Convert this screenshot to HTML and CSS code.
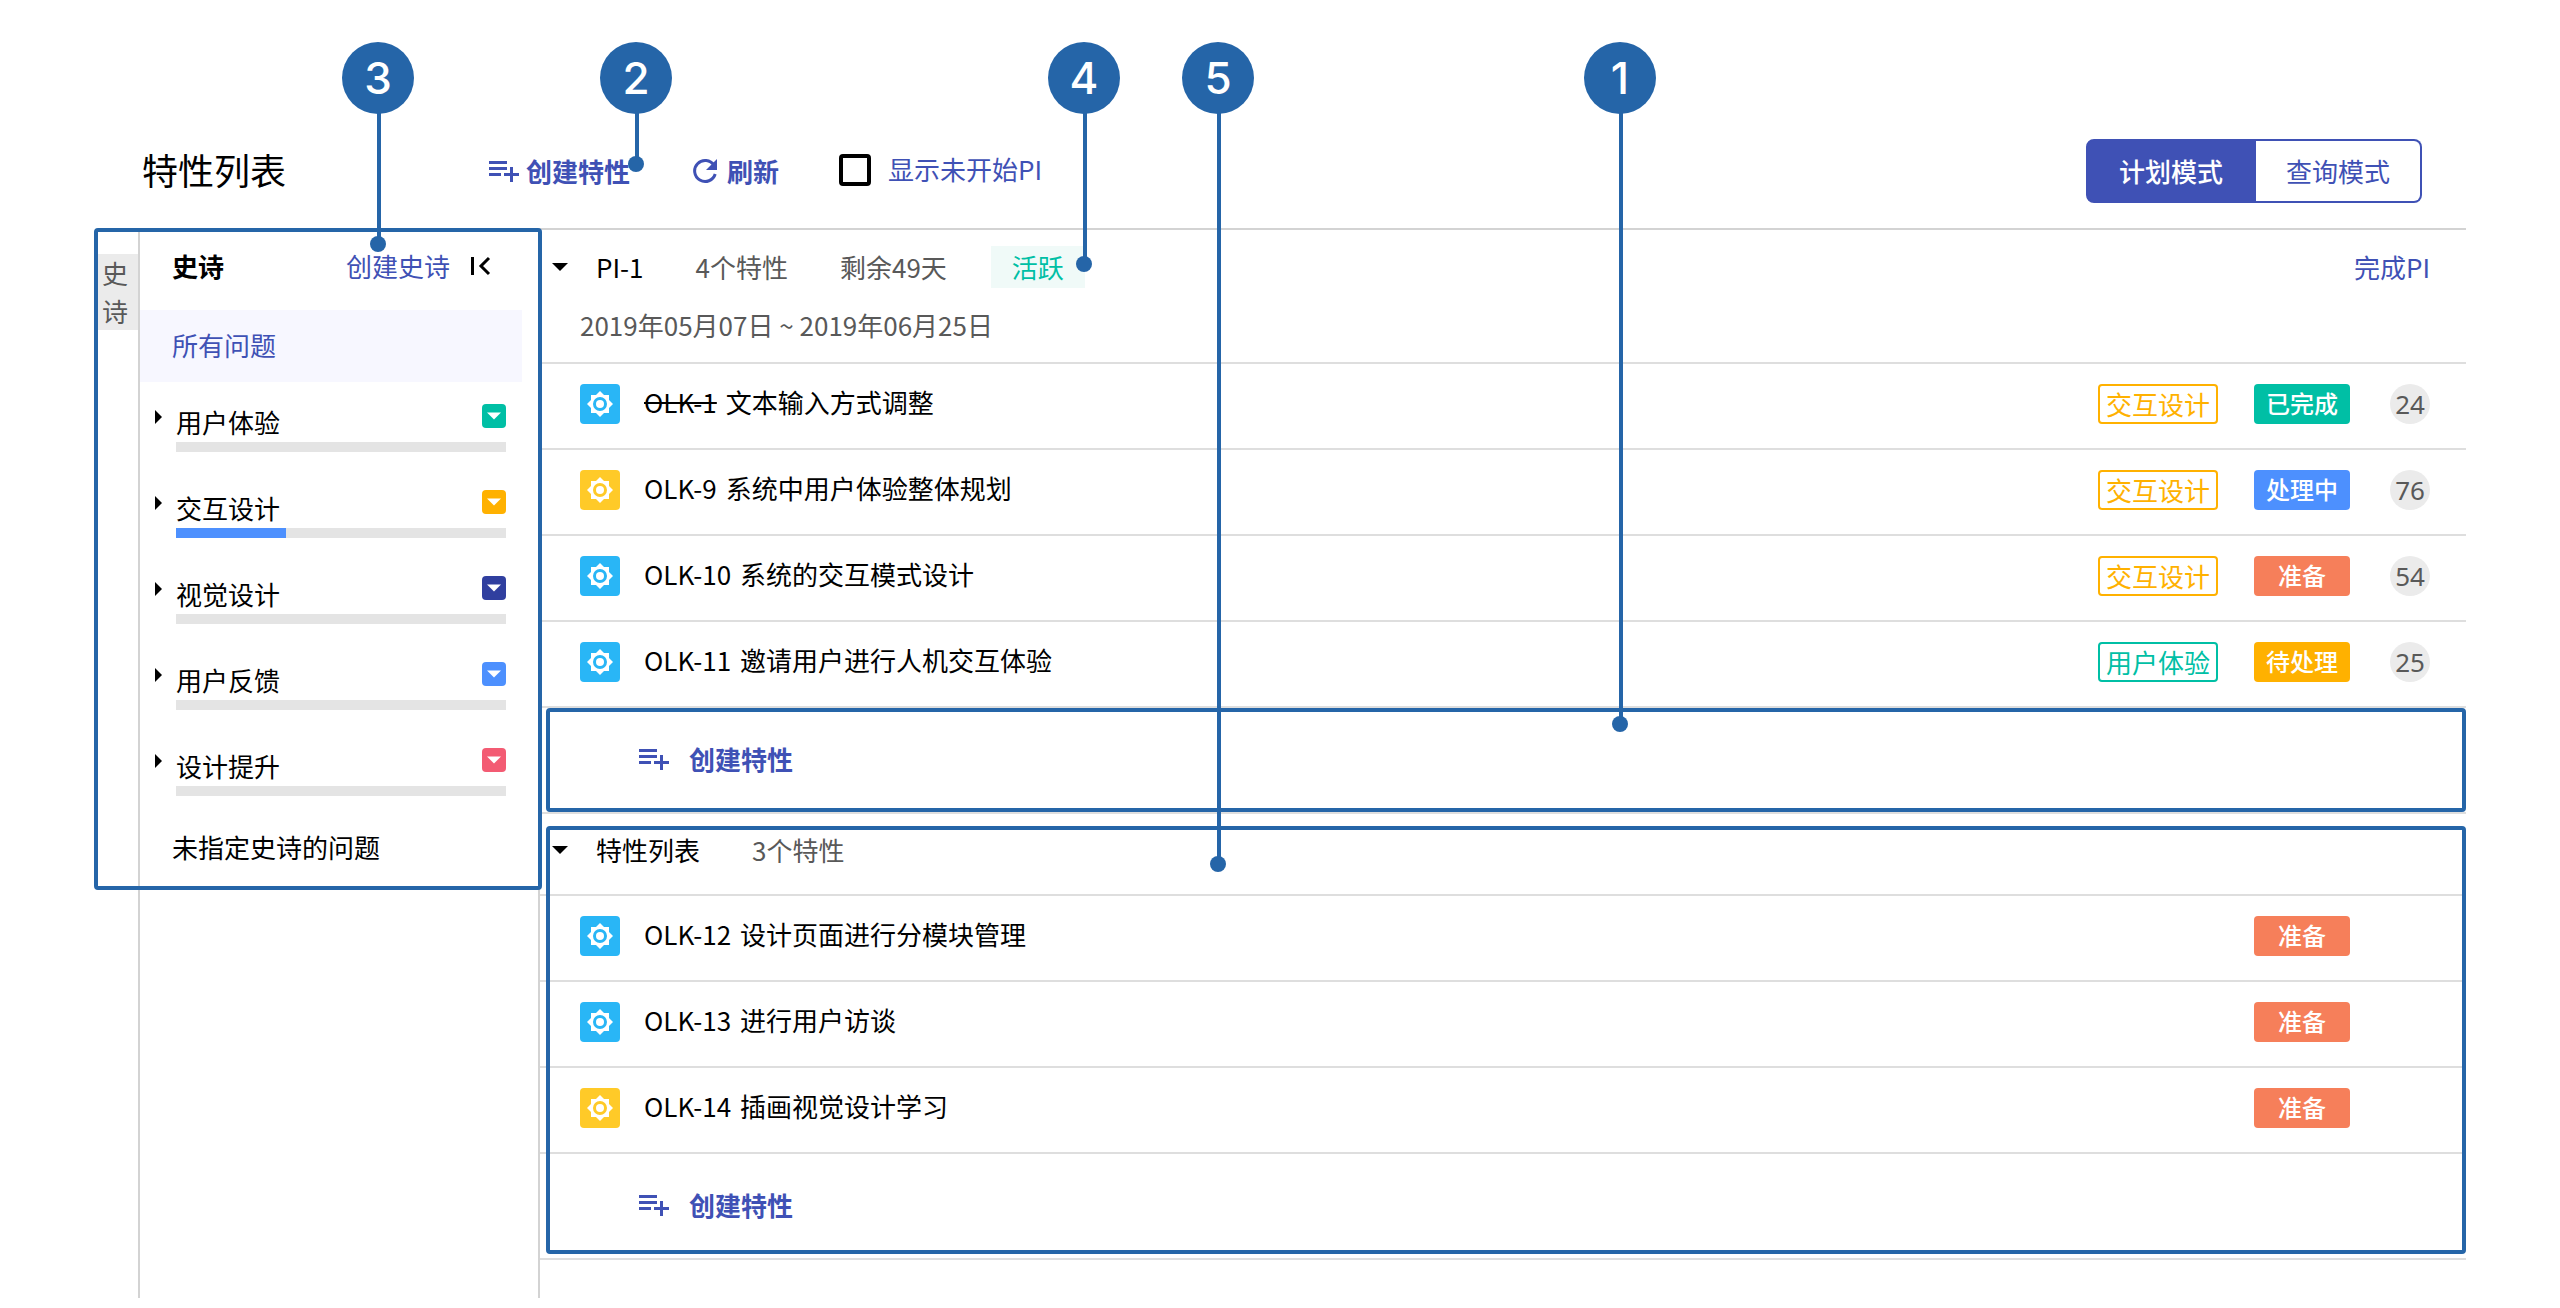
FILE: index.html
```html
<!DOCTYPE html>
<html lang="zh-CN">
<head>
<meta charset="utf-8">
<title>特性列表</title>
<link rel="stylesheet" href="styles.css">
</head>
<body>
<svg class="defs" aria-hidden="true">
  <symbol id="add" viewBox="0 0 30 24"><path d="M0 2h18v3H0zM0 8h18v3H0zM0 14h12v3H0zM21 8h3v6h6v3h-6v6h-3v-6h-6v-3h6z" fill="currentColor"/></symbol>
  <symbol id="gear" viewBox="0 0 40 40"><path fill="#fff" fill-rule="evenodd" d="M20 7l4 4h5v5l4 4-4 4v5h-5l-4 4-4-4h-5v-5l-4-4 4-4v-5h5zM20 13a7 7 0 1 0 0 14 7 7 0 0 0 0-14z"/><circle cx="20" cy="20" r="4" fill="#fff"/></symbol>
  <symbol id="down" viewBox="0 0 16 8"><path d="M0 0h16L8 8z" fill="currentColor"/></symbol>
  <symbol id="right" viewBox="0 0 8 14"><path d="M0 0l7 7-7 7z" fill="currentColor"/></symbol>
</svg>
<div class="page">
  <header class="toolbar">
    <h1 class="title">特性列表</h1>
    <button class="tool"><svg class="add"><use href="#add"/></svg>创建特性</button>
    <button class="tool tool-refresh"><svg class="refresh" viewBox="0 0 26 26"><path d="M22 7.300A10.500 10.500 0 1 0 23.200 16" fill="none" stroke="currentColor" stroke-width="3"/><path d="M25 1v11H14z" fill="currentColor"/></svg>刷新</button>
    <label class="check"><input type="checkbox"><span class="check-text">显示未开始PI</span></label>
    <div class="modes"><button class="mode mode-on">计划模式</button><button class="mode">查询模式</button></div>
  </header>
  <div class="body">
    <nav class="tabs"><button class="tab">史诗</button></nav>
    <aside class="epics">
      <div class="epics-head"><h2 class="epics-title">史诗</h2><a class="link" href="#">创建史诗</a>
        <button class="collapse" aria-label="收起"><svg viewBox="0 0 20 20"><path d="M0 1h3v18H0z"/><path d="M18 2l-8 8 8 8" fill="none" stroke="#000" stroke-width="3"/></svg></button></div>
      <a class="all" href="#">所有问题</a>
      <ul class="epic-list">
        <li class="epic"><svg class="right"><use href="#right"/></svg><span class="epic-name">用户体验</span><button class="swatch green" aria-label="菜单"><svg><use href="#down"/></svg></button><div class="bar"></div></li>
        <li class="epic"><svg class="right"><use href="#right"/></svg><span class="epic-name">交互设计</span><button class="swatch amber" aria-label="菜单"><svg><use href="#down"/></svg></button><div class="bar"><div class="fill" style="width:33.3%"></div></div></li>
        <li class="epic"><svg class="right"><use href="#right"/></svg><span class="epic-name">视觉设计</span><button class="swatch navy" aria-label="菜单"><svg><use href="#down"/></svg></button><div class="bar"></div></li>
        <li class="epic"><svg class="right"><use href="#right"/></svg><span class="epic-name">用户反馈</span><button class="swatch blue" aria-label="菜单"><svg><use href="#down"/></svg></button><div class="bar"></div></li>
        <li class="epic"><svg class="right"><use href="#right"/></svg><span class="epic-name">设计提升</span><button class="swatch pink" aria-label="菜单"><svg><use href="#down"/></svg></button><div class="bar"></div></li>
      </ul>
      <a class="none" href="#">未指定史诗的问题</a>
    </aside>
    <main class="main">
      <section>
        <div class="pi-head">
          <div class="pi-line"><svg class="down"><use href="#down"/></svg><span class="name">PI-1</span><span class="meta">4个特性</span><span class="meta">剩余49天</span><span class="state">活跃</span><a class="link finish" href="#">完成PI</a></div>
          <div class="dates">2019年05月07日 ~ 2019年06月25日</div>
        </div>
        <ul class="rows">
          <li class="row"><svg class="type sky"><use href="#gear"/></svg><span class="text"><s class="key">OLK-1</s> 文本输入方式调整</span><span class="tag tag-amber">交互设计</span><span class="status green">已完成</span><span class="count">24</span></li>
          <li class="row"><svg class="type gold"><use href="#gear"/></svg><span class="text"><span class="key">OLK-9</span> 系统中用户体验整体规划</span><span class="tag tag-amber">交互设计</span><span class="status blue">处理中</span><span class="count">76</span></li>
          <li class="row"><svg class="type sky"><use href="#gear"/></svg><span class="text"><span class="key">OLK-10</span> 系统的交互模式设计</span><span class="tag tag-amber">交互设计</span><span class="status coral">准备</span><span class="count">54</span></li>
          <li class="row"><svg class="type sky"><use href="#gear"/></svg><span class="text"><span class="key">OLK-11</span> 邀请用户进行人机交互体验</span><span class="tag tag-green">用户体验</span><span class="status amber">待处理</span><span class="count">25</span></li>
        </ul>
        <div class="create create-framed"><button class="tool"><svg class="add"><use href="#add"/></svg>创建特性</button></div>
      </section>
      <section class="backlog">
        <div class="backlog-head"><svg class="down"><use href="#down"/></svg><h2 class="name">特性列表</h2><span class="meta">3个特性</span></div>
        <ul class="rows">
          <li class="row"><svg class="type sky"><use href="#gear"/></svg><span class="text"><span class="key">OLK-12</span> 设计页面进行分模块管理</span><span class="status coral">准备</span><span class="count-gap"></span></li>
          <li class="row"><svg class="type sky"><use href="#gear"/></svg><span class="text"><span class="key">OLK-13</span> 进行用户访谈</span><span class="status coral">准备</span><span class="count-gap"></span></li>
          <li class="row"><svg class="type gold"><use href="#gear"/></svg><span class="text"><span class="key">OLK-14</span> 插画视觉设计学习</span><span class="status coral">准备</span><span class="count-gap"></span></li>
        </ul>
        <div class="create"><button class="tool"><svg class="add"><use href="#add"/></svg>创建特性</button></div>
      </section>
    </main>
    <div class="frame-epics"></div>
  </div>
  <div class="pin pin-3">3</div>
  <div class="pin pin-2">2</div>
  <div class="pin pin-4">4</div>
  <div class="pin pin-5">5</div>
  <div class="pin pin-1">1</div>
</div>
</body>
</html>
```

FILE: styles.css
```css
* { box-sizing: border-box; }
body { margin: 0; background: #fff; color: #000; font: 26px/38px "Noto Sans CJK SC", sans-serif; }
h1, h2, ul { margin: 0; padding: 0; font: inherit; list-style: none; }
button { margin: 0; padding: 0; border: 0; background: none; font: inherit; color: inherit; cursor: pointer; }
a { color: inherit; text-decoration: none; }
svg { display: block; flex: none; }
.defs { position: absolute; width: 0; height: 0; }

.page { position: relative; min-height: 100vh; display: flex; flex-direction: column; padding: 114px 94px 10px 98px; }

/* Toolbar */
.toolbar { display: flex; align-items: center; height: 116px; padding: 0 44px; border-bottom: 2px solid #d3d3d3; }
.title { width: 347px; padding-bottom: 4px; font-size: 36px; line-height: 54px; }
.tool { display: flex; align-items: center; gap: 7px; color: #3f51b5; font-weight: 700; }
.add { width: 30px; height: 24px; }
.tool-refresh { margin-left: 62px; gap: 9px; }
.refresh { width: 26px; height: 26px; }
.check { display: flex; align-items: center; gap: 17px; margin-left: 60px; padding-bottom: 2px; color: #3f51b5; }
.check-text { padding-bottom: 2px; }
.check input { appearance: none; width: 32px; height: 32px; margin: 0; border: 4px solid #000; border-radius: 4px; }
.modes { display: flex; margin-left: auto; }
.mode { width: 166px; height: 64px; border: 2px solid #3f51b5; border-left: 0; border-radius: 0 8px 8px 0; color: #3f51b5; }
.mode-on { width: 170px; border-left: 2px solid #3f51b5; border-radius: 8px 0 0 8px; background: #3f51b5; color: #fff; font-weight: 500; }

/* Epic side panel */
.body { position: relative; flex: 1; display: flex; }
.tabs { width: 42px; padding-top: 24px; border-right: 2px solid #d3d3d3; }
.tab { width: 40px; padding: 0 8px 0 4px; background: #ebebeb; color: #595959; text-align: left; }
.epics { width: 400px; border-right: 2px solid #d3d3d3; }
.epics-head { display: flex; align-items: center; height: 80px; padding: 0 47px 8px 32px; }
.epics-title { font-weight: 700; margin-right: auto; }
.link { color: #3f51b5; }
.collapse { margin-left: 21px; }
.collapse svg { width: 20px; height: 20px; }
.all { display: block; margin-right: 16px; padding: 16px 32px 18px; background: #f7f7ff; color: #3f51b5; }
.epic { display: grid; grid-template-columns: 21px 1fr 24px; grid-template-rows: 38px 10px; align-items: start; align-content: start; height: 86px; padding: 22px 32px 0 15px; }
.right { width: 8px; height: 14px; margin-top: 6px; }
.epic-name { line-height: 36px; }
.swatch { display: grid; place-items: center; width: 24px; height: 24px; border-radius: 4px; color: #fff; }
.swatch svg { width: 14px; height: 8px; }
.bar { grid-column: 2 / 4; height: 10px; background: #e4e4e4; }
.fill { height: 10px; background: #4d90fe; }
.none { display: block; padding: 16px 32px; }

/* Feature lists */
.main { flex: 1; min-width: 0; }
.pi-head { height: 134px; padding-top: 16px; border-bottom: 2px solid #dedede; }
.pi-line { display: flex; align-items: center; height: 42px; padding: 0 36px 0 12px; }
.down { width: 16px; height: 8px; }
.name { margin-left: 28px; }
.meta { margin-left: 52px; color: #595959; }
.state { margin-left: 44px; padding: 2px 21px; background: #f0faf8; color: #00bfa5; }
.finish { margin-left: auto; }
.dates { padding: 18px 40px 0; color: #595959; }
.row { display: flex; align-items: center; height: 86px; padding: 0 36px 4px 40px; border-bottom: 2px solid #dedede; }
.type { width: 40px; height: 40px; border-radius: 4px; }
.text { flex: 1; margin-left: 24px; padding-bottom: 4px; }
.key { margin-right: 3px; }
.tag { width: 120px; height: 40px; border: 2px solid; border-radius: 4px; line-height: 36px; text-align: center; }
.status { width: 96px; height: 40px; margin-left: 36px; border-radius: 4px; color: #fff; font-size: 24px; font-weight: 500; line-height: 38px; text-align: center; }
.count { width: 40px; height: 40px; margin-left: 40px; border-radius: 50%; background: #ebebeb; color: #595959; font-family: "Noto Sans", sans-serif; line-height: 40px; text-align: center; }
.count-gap { width: 80px; }
.create { position: relative; display: flex; align-items: center; height: 106px; padding: 0 99px 2px; border-bottom: 2px solid #dedede; }
.create .tool { gap: 20px; }
.backlog { position: relative; }
.backlog-head { display: flex; align-items: center; height: 82px; padding: 0 12px 8px; border-bottom: 2px solid #dedede; }

.sky { background: #29b6f6; }
.gold { background: #ffca28; }
.green { background: #00bfa5; }
.amber { background: #ffb100; }
.navy { background: #303f9f; }
.blue { background: #4d90fe; }
.pink { background: #f35b73; }
.coral { background: #f67f5a; }
.tag-amber { color: #ffb100; }
.tag-green { color: #00bfa5; }

/* Guide frames and numbered pins laid over the page */
.frame-epics, .create-framed::after, .backlog::after { content: ""; position: absolute; border: 4px solid #2565a8; border-radius: 4px; pointer-events: none; }
.frame-epics { top: -2px; left: -4px; width: 448px; height: 662px; }
.create-framed::after { inset: 0 0 0 6px; }
.backlog::after { inset: 12px 0 6px 6px; }
.pin { position: absolute; top: 42px; width: 72px; height: 72px; border-radius: 50%; background: #2565a8; color: #fff; font: 500 44px/72px Inter, sans-serif; text-align: center; }
.pin::before { content: ""; position: absolute; top: 70px; left: 35px; width: 4px; height: var(--stem); background: #2565a8; }
.pin::after { content: ""; position: absolute; top: calc(66px + var(--stem)); left: 28px; width: 16px; height: 16px; border-radius: 50%; background: #2565a8; }
.pin-3 { left: 342px; --stem: 128px; }
.pin-2 { left: 600px; --stem: 48px; }
.pin-4 { left: 1048px; --stem: 148px; }
.pin-5 { left: 1182px; --stem: 748px; }
.pin-1 { left: 1584px; --stem: 608px; }
```
